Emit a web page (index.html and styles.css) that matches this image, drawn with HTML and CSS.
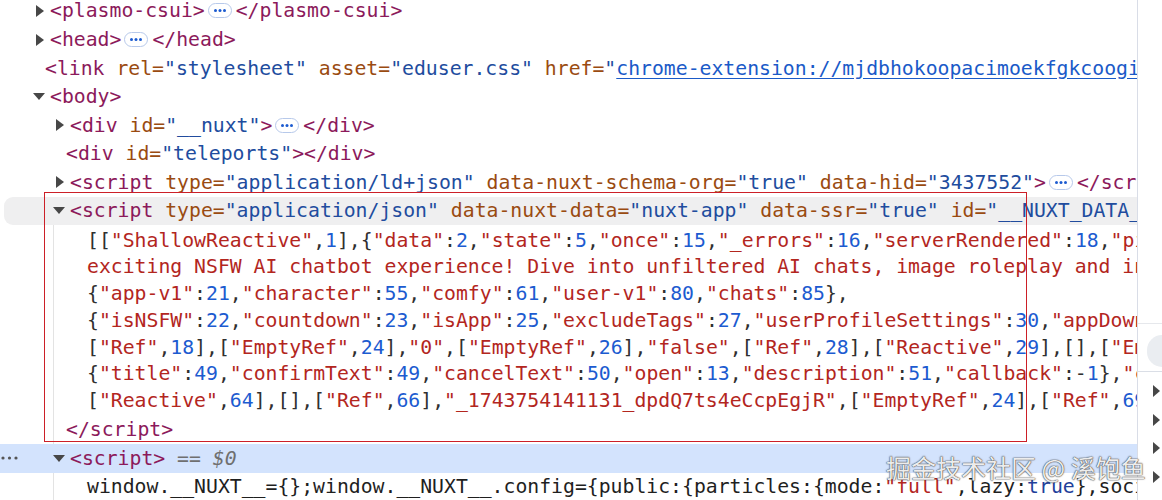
FILE: index.html
```html
<!DOCTYPE html>
<html lang="en">
<head>
<meta charset="utf-8">
<title>Elements</title>
<link rel="stylesheet" href="styles.css">
</head>
<body>
<div class="screen">
  <div class="elements">
    <div class="tree">
      <div class="row l1"><span class="tog r"></span><span class="t">&lt;plasmo-csui&gt;</span><svg class="badge" width="24" height="15" viewBox="0 0 24 15"><rect x="0.5" y="0.5" width="23" height="14" rx="7" fill="#fff" stroke="#b7c9ea"/><circle cx="7.5" cy="7.5" r="1.5" fill="#1c5bd0"/><circle cx="12" cy="7.5" r="1.5" fill="#1c5bd0"/><circle cx="16.5" cy="7.5" r="1.5" fill="#1c5bd0"/></svg><span class="t">&lt;/plasmo-csui&gt;</span></div>
      <div class="row l1"><span class="tog r"></span><span class="t">&lt;head&gt;</span><svg class="badge" width="24" height="15" viewBox="0 0 24 15"><rect x="0.5" y="0.5" width="23" height="14" rx="7" fill="#fff" stroke="#b7c9ea"/><circle cx="7.5" cy="7.5" r="1.5" fill="#1c5bd0"/><circle cx="12" cy="7.5" r="1.5" fill="#1c5bd0"/><circle cx="16.5" cy="7.5" r="1.5" fill="#1c5bd0"/></svg><span class="t">&lt;/head&gt;</span></div>
      <div class="row l1 leaf"><span><span class="t">&lt;link</span> <span class="an">rel=</span><span class="av">"stylesheet"</span> <span class="an">asset=</span><span class="av">"eduser.css"</span> <span class="an">href=</span><span class="av">"</span><span class="lk">chrome-extension://mjdbhokoopacimoekfgkcoogidlcblfhp/assets/eduser.css</span><span class="av">"</span><span class="t">&gt;</span></span></div>
      <div class="row l1"><span class="tog d"></span><span class="t">&lt;body&gt;</span></div>
      <div class="row l2"><span class="tog r"></span><span><span class="t">&lt;div</span> <span class="an">id=</span><span class="av">"__nuxt"</span><span class="t">&gt;</span></span><svg class="badge" width="24" height="15" viewBox="0 0 24 15"><rect x="0.5" y="0.5" width="23" height="14" rx="7" fill="#fff" stroke="#b7c9ea"/><circle cx="7.5" cy="7.5" r="1.5" fill="#1c5bd0"/><circle cx="12" cy="7.5" r="1.5" fill="#1c5bd0"/><circle cx="16.5" cy="7.5" r="1.5" fill="#1c5bd0"/></svg><span class="t">&lt;/div&gt;</span></div>
      <div class="row l2 leaf"><span><span class="t">&lt;div</span> <span class="an">id=</span><span class="av">"teleports"</span><span class="t">&gt;&lt;/div&gt;</span></span></div>
      <div class="row l2"><span class="tog r"></span><span><span class="t">&lt;script</span> <span class="an">type=</span><span class="av">"application/ld+json"</span> <span class="an">data-nuxt-schema-org=</span><span class="av">"true"</span> <span class="an">data-hid=</span><span class="av">"3437552"</span><span class="t">&gt;</span></span><svg class="badge" width="24" height="15" viewBox="0 0 24 15"><rect x="0.5" y="0.5" width="23" height="14" rx="7" fill="#fff" stroke="#b7c9ea"/><circle cx="7.5" cy="7.5" r="1.5" fill="#1c5bd0"/><circle cx="12" cy="7.5" r="1.5" fill="#1c5bd0"/><circle cx="16.5" cy="7.5" r="1.5" fill="#1c5bd0"/></svg><span class="t">&lt;/script&gt;</span></div>
      <div class="row l2 hover"><span class="tog d"></span><span><span class="t">&lt;script</span> <span class="an">type=</span><span class="av">"application/json"</span> <span class="an">data-nuxt-data=</span><span class="av">"nuxt-app"</span> <span class="an">data-ssr=</span><span class="av">"true"</span> <span class="an">id=</span><span class="av">"__NUXT_DATA__"</span><span class="t">&gt;</span></span></div>
      <div class="kids">
        <div class="json">[[<span class="s">"ShallowReactive"</span>,<span class="n">1</span>],{<span class="s">"data"</span>:<span class="n">2</span>,<span class="s">"state"</span>:<span class="n">5</span>,<span class="s">"once"</span>:<span class="n">15</span>,<span class="s">"_errors"</span>:<span class="n">16</span>,<span class="s">"serverRendered"</span>:<span class="n">18</span>,<span class="s">"pinia"</span>:<span class="n">19</span>}
<span class="s">exciting NSFW AI chatbot experience! Dive into unfiltered AI chats, image roleplay and interactive stories."</span>
{<span class="s">"app-v1"</span>:<span class="n">21</span>,<span class="s">"character"</span>:<span class="n">55</span>,<span class="s">"comfy"</span>:<span class="n">61</span>,<span class="s">"user-v1"</span>:<span class="n">80</span>,<span class="s">"chats"</span>:<span class="n">85</span>},
{<span class="s">"isNSFW"</span>:<span class="n">22</span>,<span class="s">"countdown"</span>:<span class="n">23</span>,<span class="s">"isApp"</span>:<span class="n">25</span>,<span class="s">"excludeTags"</span>:<span class="n">27</span>,<span class="s">"userProfileSettings"</span>:<span class="n">30</span>,<span class="s">"appDownload"</span>:<span class="n">33</span>}
[<span class="s">"Ref"</span>,<span class="n">18</span>],[<span class="s">"EmptyRef"</span>,<span class="n">24</span>],<span class="s">"0"</span>,[<span class="s">"EmptyRef"</span>,<span class="n">26</span>],<span class="s">"false"</span>,[<span class="s">"Ref"</span>,<span class="n">28</span>],[<span class="s">"Reactive"</span>,<span class="n">29</span>],[],[<span class="s">"EmptyRef"</span>,<span class="n">31</span>]
{<span class="s">"title"</span>:<span class="n">49</span>,<span class="s">"confirmText"</span>:<span class="n">49</span>,<span class="s">"cancelText"</span>:<span class="n">50</span>,<span class="s">"open"</span>:<span class="n">13</span>,<span class="s">"description"</span>:<span class="n">51</span>,<span class="s">"callback"</span>:-<span class="n">1</span>},<span class="s">"confirm"</span>
[<span class="s">"Reactive"</span>,<span class="n">64</span>],[],[<span class="s">"Ref"</span>,<span class="n">66</span>],<span class="s">"_1743754141131_dpdQ7ts4eCcpEgjR"</span>,[<span class="s">"EmptyRef"</span>,<span class="n">24</span>],[<span class="s">"Ref"</span>,<span class="n">69</span>]</div>
        <div class="row close"><span class="t">&lt;/script&gt;</span></div>
      </div>
      <div class="row selected"><span class="more"><svg width="20" height="6" viewBox="0 0 20 6"><circle cx="3" cy="3" r="1.6" fill="#555"/><circle cx="9.5" cy="3" r="1.6" fill="#555"/><circle cx="16" cy="3" r="1.6" fill="#555"/></svg></span><span class="tog d"></span><span class="t">&lt;script&gt;</span><span class="eq"> == <i>$0</i></span></div>
      <div class="kids">
        <div class="row code"><span>window.__NUXT__={};window.__NUXT__.config={public:{particles:{mode:<span class="s">"full"</span>,lazy:<span class="k">true</span>},social:{}}}</span></div>
      </div>
    </div>
    <div class="annot"></div>
  </div>
  <div class="side">
    <div class="side-top"></div>
    <div class="side-bar"><div class="pill"></div></div>
    <div class="side-list">
      <span class="stri"></span>
      <span class="stri"></span>
      <span class="stri"></span>
      <span class="stri"></span>
    </div>
  </div>
  <div class="watermark">掘金技术社区 @ 溪饱鱼</div>
</div>
</body>
</html>
```

FILE: styles.css
```css
* { box-sizing: border-box; margin: 0; padding: 0; }
html, body { width: 1162px; height: 500px; overflow: hidden; background: #fff; }
body {
  font-family: "DejaVu Sans Mono", "Liberation Mono", monospace;
  font-size: 19.78px;
  color: #303030;
}
.screen { position: relative; display: flex; height: 500px; }
.elements { position: relative; width: 1137px; flex: none; overflow: hidden; }
.tree { margin-top: -3.3px; }

.row {
  display: flex;
  align-items: center;
  height: 28.57px;
  white-space: pre;
}
.row > * { flex: none; }
.l1 { padding-left: 34px; }
.l1.leaf { padding-left: 45px; }
.l2 { padding-left: 54px; }
.l2.leaf { padding-left: 66px; }

.tog { width: 16px; height: 14px; display: flex; align-items: center; }
.tog.r::before {
  content: "";
  margin-left: 2px;
  border-left: 8px solid #474747;
  border-top: 6px solid transparent;
  border-bottom: 6px solid transparent;
}
.tog.d::before {
  content: "";
  margin-left: -1px;
  border-top: 7px solid #474747;
  border-left: 6px solid transparent;
  border-right: 6px solid transparent;
}

.t { color: #8c1a5b; }
.an { color: #9a4b11; }
.av { color: #214c9e; }
.lk { color: #1a5ac8; text-decoration: underline; text-underline-offset: 3px; }
.s { color: #b3261e; }
.n { color: #1c5bd0; }
.k { color: #21409a; }

.badge { margin: 0 4px 0 3px; display: block; }

.hover {
  margin-left: 4px;
  padding-left: 50px;
  background: #efeff0;
  border-radius: 9px 0 0 9px;
}

.kids { margin-left: 53px; border-left: 1px solid #e3e3e3; }
.json {
  white-space: pre;
  line-height: 26.8px;
  padding: 2.3px 0 0.5px 33px;
}
.close { padding-left: 12px; }

.selected { background: #d3e3fd; padding-left: 0; }
.more { width: 54px; display: flex; align-items: center; padding-left: 0; }
.more svg { display: block; }
.eq { color: #6f6f6f; }
.eq i { font-style: italic; }

.code { padding-left: 33px; color: #1f1f1f; }

.annot {
  position: absolute;
  left: 44px;
  top: 192px;
  width: 983px;
  height: 250px;
  border: 1px solid #cc1f27;
  pointer-events: none;
}

.side { flex: 1; border-left: 1px solid #d9dde7; display: flex; flex-direction: column; }
.side-top { height: 324px; border-bottom: 1px solid #e6e8ec; }
.side-bar { height: 48px; padding: 11px 0 0 9px; border-bottom: 1px solid #dadee6; }
.pill { height: 32px; background: #eaedf1; border-radius: 16px 0 0 16px; }
.side-list { display: flex; flex-direction: column; padding: 13px 0 0 15px; gap: 16.5px; }
.stri {
  display: block;
  width: 0; height: 0;
  border-left: 7px solid #474747;
  border-top: 6px solid transparent;
  border-bottom: 6px solid transparent;
}

.watermark {
  position: absolute;
  left: 886px;
  top: 450px;
  font-family: "Noto Sans CJK SC", "Noto Sans", sans-serif;
  font-size: 25px;
  line-height: 34px;
  color: rgba(255, 255, 255, 0.92);
  text-shadow: 0 0 1px rgba(60,60,60,0.9), 0 0 1px rgba(60,60,60,0.9), 0 0 2px rgba(60,60,60,0.5);
  white-space: nowrap;
}
```
